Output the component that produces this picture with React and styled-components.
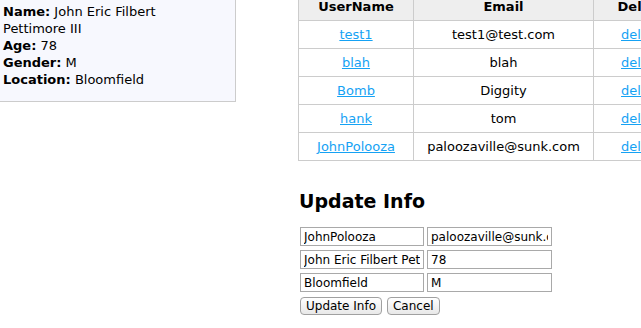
import React from 'react';
import styled, { createGlobalStyle } from 'styled-components';

const GlobalStyle = createGlobalStyle`
  html, body {
    margin: 0;
    padding: 0;
    background: #ffffff;
    overflow: hidden;
  }
  body {
    font-family: "DejaVu Sans", "Liberation Sans", sans-serif;
    font-size: 13px;
    color: #000;
  }
`;

const Page = styled.div`
  display: flex;
  align-items: flex-start;
  margin-top: -8px;
  width: 800px;
`;

const Sidebar = styled.div`
  box-sizing: border-box;
  width: 236px;
  padding: 10px 22px 13px 3px;
  background: #f7f8fe;
  border: 1px solid #cccccc;
  border-left: none;
  line-height: 17px;
  font-size: 13px;
`;

const InfoLine = styled.div`
  b {
    font-weight: bold;
  }
`;

const Main = styled.div`
  margin-left: 62px;
`;

const Table = styled.table`
  border-collapse: collapse;
  font-size: 13px;
`;

const Th = styled.th`
  background: #eeeeee;
  border: 1px solid #cccccc;
  height: 28px;
  padding: 0 6px;
  font-weight: bold;
  text-align: center;
  width: ${p => p.$w}px;
  box-sizing: border-box;
`;

const Td = styled.td`
  border: 1px solid #cccccc;
  height: 28px;
  padding: 0 6px;
  text-align: center;
  box-sizing: border-box;
`;

const Link = styled.a`
  color: #15a2f4;
  text-decoration: underline;
`;

const Heading = styled.h2`
  margin: 28px 0 14px 1px;
  font-size: 19px;
  font-weight: bold;
  line-height: 24px;
`;

const Form = styled.form`
  margin-left: 2px;
  display: flex;
  flex-direction: column;
  gap: 4px;
`;

const Row = styled.div`
  display: flex;
  gap: 3px;
`;

const Input = styled.input`
  box-sizing: border-box;
  width: ${p => p.$w}px;
  height: 19px;
  padding: 1px 3px;
  border: 1px solid #a9a9a9;
  font-family: "DejaVu Sans", "Liberation Sans", sans-serif;
  font-size: 12px;
  color: #000;
  background: #fff;
`;

const Buttons = styled.div`
  display: flex;
  gap: 5px;
  margin-top: 1px;
`;

const Button = styled.button`
  box-sizing: border-box;
  height: 18px;
  padding: 0 5px;
  border: 1px solid #a0a0a0;
  border-radius: 4px;
  background: linear-gradient(#ffffff, #e8e8e8);
  font-family: "DejaVu Sans", "Liberation Sans", sans-serif;
  font-size: 12px;
  color: #000;
`;

const users = [
  { name: 'test1', email: 'test1@test.com' },
  { name: 'blah', email: 'blah' },
  { name: 'Bomb', email: 'Diggity' },
  { name: 'hank', email: 'tom' },
  { name: 'JohnPolooza', email: 'paloozaville@sunk.com' },
];

export default function App() {
  return (
    <>
      <GlobalStyle />
      <Page>
        <Sidebar>
          <InfoLine><b>Name:</b> John Eric Filbert Pettimore III</InfoLine>
          <InfoLine><b>Age:</b> 78</InfoLine>
          <InfoLine><b>Gender:</b> M</InfoLine>
          <InfoLine><b>Location:</b> Bloomfield</InfoLine>
        </Sidebar>
        <Main>
          <Table>
            <thead>
              <tr>
                <Th $w={115}>UserName</Th>
                <Th $w={180}>Email</Th>
                <Th $w={96}>Delete</Th>
              </tr>
            </thead>
            <tbody>
              {users.map(u => (
                <tr key={u.name}>
                  <Td><Link href="#">{u.name}</Link></Td>
                  <Td>{u.email}</Td>
                  <Td><Link href="#">delete</Link></Td>
                </tr>
              ))}
            </tbody>
          </Table>
          <Heading>Update Info</Heading>
          <Form onSubmit={e => e.preventDefault()}>
            <Row>
              <Input $w={124} defaultValue="JohnPolooza" />
              <Input $w={125} defaultValue="paloozaville@sunk.com" />
            </Row>
            <Row>
              <Input $w={124} defaultValue="John Eric Filbert Pettimore III" />
              <Input $w={125} defaultValue="78" />
            </Row>
            <Row>
              <Input $w={124} defaultValue="Bloomfield" />
              <Input $w={125} defaultValue="M" />
            </Row>
            <Buttons>
              <Button type="submit">Update Info</Button>
              <Button type="button">Cancel</Button>
            </Buttons>
          </Form>
        </Main>
      </Page>
    </>
  );
}
